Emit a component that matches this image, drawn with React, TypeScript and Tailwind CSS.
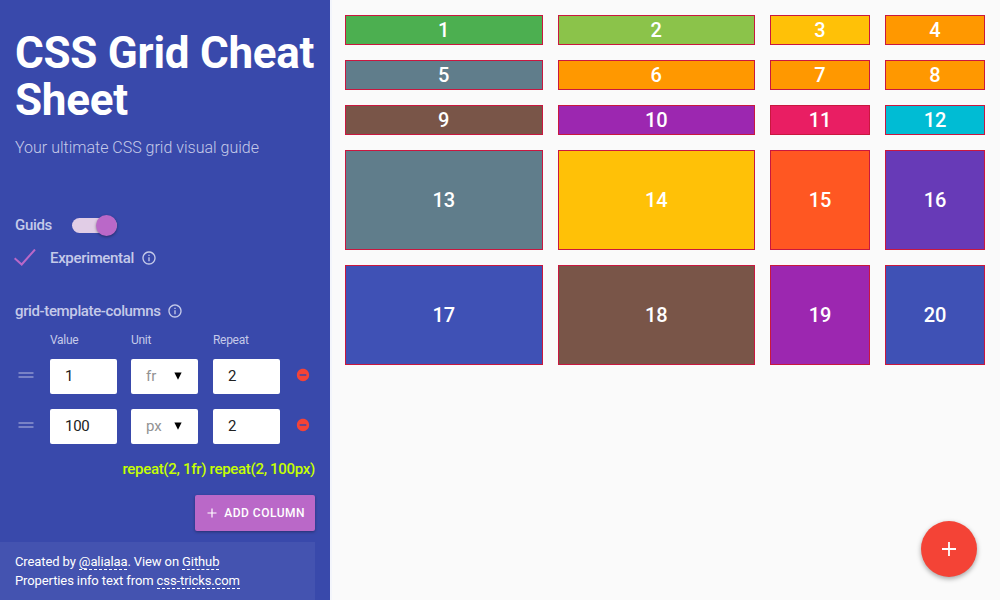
import React from "react";

const cells: string[] = [
  "bg-[#4caf50]", "bg-[#8bc34a]", "bg-[#ffc107]", "bg-[#ff9800]",
  "bg-[#607d8b]", "bg-[#ff9800]", "bg-[#ff9800]", "bg-[#ff9800]",
  "bg-[#795548]", "bg-[#9c27b0]", "bg-[#e91e63]", "bg-[#00bcd4]",
  "bg-[#607d8b]", "bg-[#ffc107]", "bg-[#ff5722]", "bg-[#673ab7]",
  "bg-[#3f51b5]", "bg-[#795548]", "bg-[#9c27b0]", "bg-[#3f51b5]",
];

function InfoIcon() {
  return (
    <svg className="size-4 shrink-0" viewBox="0 0 24 24" fill="currentColor">
      <path d="M11 17h2v-6h-2v6zm1-15C6.48 2 2 6.48 2 12s4.48 10 10 10 10-4.48 10-10S17.52 2 12 2zm0 18c-4.41 0-8-3.59-8-8s3.59-8 8-8 8 3.59 8 8-3.59 8-8 8zM11 9h2V7h-2v2z" />
    </svg>
  );
}

function TrackRow({ value, unit, repeat }: { value: string; unit: string; repeat: string }) {
  const box = "flex h-[35px] w-[67px] items-center rounded-[2px] bg-white pl-[15px]";
  return (
    <div className="flex h-[35px] items-center">
      <div className="flex w-[35px] items-center pl-[3px] pb-[3px]">
        <svg className="h-[6px] w-[16px] text-[#7882c6]" viewBox="0 0 16 6" fill="currentColor">
          <path d="M0.5 0h15v2h-15zM0.5 4h15v2h-15z" />
        </svg>
      </div>
      <div className={`${box} mr-[14px] tracking-[-0.3px]`}>{value}</div>
      <div className={`${box} mr-[15px] text-[#929292]`}>
        <span className="w-[28px]">{unit}</span>
        <svg className="mb-px h-[8px] w-[8px] text-black" viewBox="0 0 8 8" fill="currentColor">
          <path d="M0.4 0.5h7.2L4 7.8z" />
        </svg>
      </div>
      <div className={box}>{repeat}</div>
      <svg className="mb-[3px] ml-[15px] size-[16px] text-[#f44336]" viewBox="0 0 24 24" fill="currentColor">
        <path d="M12 2.8C6.9 2.8 2.8 6.9 2.8 12s4.1 9.2 9.2 9.2 9.2-4.1 9.2-9.2S17.1 2.8 12 2.8zm5 10.2H7v-2h10v2z" />
      </svg>
    </div>
  );
}

export default function App() {
  return (
    <div className="flex h-[600px] w-[1000px] overflow-hidden bg-[#fafafa] font-['Roboto',sans-serif] text-[15px]">
      <aside className="flex w-[330px] shrink-0 flex-col bg-[#3949ab] text-[#c5cae9] shadow-[2px_0_0_#f3f5fb]">
        <div className="h-[542px] shrink-0 px-[15px] pt-[30px]">
          <h1 className="whitespace-nowrap text-[44px] leading-[47px] font-bold tracking-[-0.27px] text-white">
            CSS Grid Cheat<br />Sheet
          </h1>
          <p className="mt-[14px] text-[16px] leading-[20px] font-light">Your ultimate CSS grid visual guide</p>

          <div className="mt-[57px] flex h-[20px] items-center font-medium tracking-[-0.33px]">
            <span className="w-[57px]">Guids</span>
            <div className="flex h-[15px] w-[45px] items-center justify-end rounded-full bg-[#e1cde6]">
              <span className="size-[21px] shrink-0 rounded-full bg-[#ba68c8] shadow-[0_1px_3px_rgba(0,0,0,0.4)]" />
            </div>
          </div>
          <div className="mt-[13px] flex h-[20px] items-center font-medium tracking-[-0.33px]">
            <svg className="-ml-[1px] mr-[14px] h-[18px] w-[22px]" viewBox="0 0 22 18" fill="none" stroke="#ba68c8" strokeWidth="2">
              <path d="M0.6 9.2L7.7 15.5L21 0.5" />
            </svg>
            <span className="mr-[7px]">Experimental</span>
            <InfoIcon />
          </div>

          <div className="mt-[33px] flex h-[20px] items-center gap-[6px] font-medium tracking-[-0.37px]">
            <span>grid-template-columns</span>
            <InfoIcon />
          </div>
          <div className="mt-[11px] flex h-[16px] items-center pl-[35px] text-[12px] tracking-[-0.3px]">
            <span className="w-[81px]">Value</span>
            <span className="w-[82px]">Unit</span>
            <span>Repeat</span>
          </div>
          <div className="mt-[11px] flex flex-col gap-[15px] text-[#212121]">
            <TrackRow value="1" unit="fr" repeat="2" />
            <TrackRow value="100" unit="px" repeat="2" />
          </div>
          <div className="mt-[15px] text-right text-[15px] leading-[20px] font-medium tracking-[-0.3px] text-[#c6ff00]">
            repeat(2, 1fr) repeat(2, 100px)
          </div>
          <div className="mt-[16px] flex justify-end">
            <button className="flex h-[36px] w-[120px] items-center justify-end rounded-[2px] bg-[#ba68c8] pr-[10px] text-[12px] font-medium whitespace-nowrap text-white shadow-[0_1px_3px_rgba(0,0,0,0.35)]">
              <svg className="mr-[7px] size-[10px]" viewBox="0 0 10 10" stroke="currentColor" strokeWidth="1.2">
                <path d="M5 0.5v9M0.5 5h9" />
              </svg>
              <span className="tracking-[0.5px]">ADD COLUMN</span>
            </button>
          </div>
        </div>
        <footer className="h-[58px] w-[315px] bg-[#4453b0] pt-[10px] pl-[15px] text-[13px] leading-[19px] tracking-[-0.11px] text-white">
          <p>
            Created by <a className="border-b border-dashed border-white">@alialaa</a>. View on{" "}
            <a className="border-b border-dashed border-white">Github</a>
          </p>
          <p>
            Properties info text from <a className="border-b border-dashed border-white">css-tricks.com</a>
          </p>
        </footer>
      </aside>

      <main className="grid h-[380px] flex-1 grid-cols-[1fr_1fr_100px_100px] grid-rows-[30px_30px_30px_100px_100px] gap-[15px] p-[15px]">
        {cells.map((color, i) => (
          <div
            key={i}
            className={`flex items-center justify-center border border-[#c9173f] text-[20px] font-medium text-white ${color}`}
          >
            {i + 1}
          </div>
        ))}
      </main>

      <button className="absolute top-[521px] left-[921px] flex size-[56px] items-center justify-center rounded-full bg-[#f44336] pb-px text-white shadow-[0_2px_5px_rgba(0,0,0,0.35)]">
        <svg className="size-[14px]" viewBox="0 0 14 14" stroke="currentColor" strokeWidth="1.8">
          <path d="M7 0v14M0 7h14" />
        </svg>
      </button>
    </div>
  );
}
